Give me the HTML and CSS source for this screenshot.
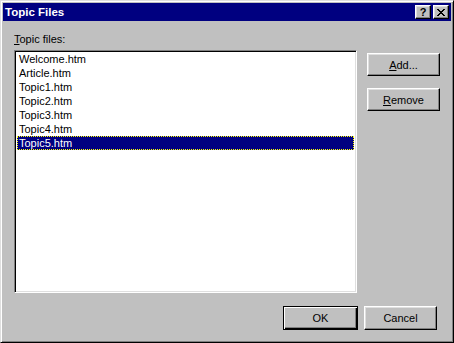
FILE: index.html
```html
<!DOCTYPE html>
<html lang="en">
<head>
    <meta charset="UTF-8">
    <title>Topic Files</title>
    <link rel="stylesheet" href="styles.css">
</head>
<body>

    <div class="topic-files-window">
        <!-- Caption -->
        <div class="topic-files-titlebar">
            <span class="topic-files-title">Topic Files</span>
            <div class="topic-files-caption-buttons">
                <button class="topic-files-caption-btn topic-files-help">?</button>
                <button class="topic-files-caption-btn topic-files-close">
                    <svg width="8" height="7" viewBox="0 0 8 7" shape-rendering="crispEdges">
                        <path d="M0 0h2v1h-2zM6 0h2v1h-2zM1 1h2v1h-2zM5 1h2v1h-2zM2 2h4v1h-4zM3 3h2v1h-2zM2 4h4v1h-4zM1 5h2v1h-2zM5 5h2v1h-2zM0 6h2v1h-2zM6 6h2v1h-2z" fill="#000"/>
                    </svg>
                </button>
            </div>
        </div>

        <div class="topic-files-body">
            <div class="topic-files-label"><u>T</u>opic files:</div>

            <div class="topic-files-main">
                <ul class="topic-files-list">
                    <li>Welcome.htm</li>
                    <li>Article.htm</li>
                    <li>Topic1.htm</li>
                    <li>Topic2.htm</li>
                    <li>Topic3.htm</li>
                    <li>Topic4.htm</li>
                    <li class="topic-files-selected">Topic5.htm</li>
                </ul>
                <div class="topic-files-side">
                    <button class="topic-files-btn"><u>A</u>dd...</button>
                    <button class="topic-files-btn"><u>R</u>emove</button>
                </div>
            </div>

            <div class="topic-files-footer">
                <button class="topic-files-btn topic-files-default">OK</button>
                <button class="topic-files-btn">Cancel</button>
            </div>
        </div>
    </div>

</body>
</html>
```

FILE: styles.css
```css
/* Page */
body {
    margin: 0;
    background-color: #c0c0c0;
    font-family: 'Liberation Sans', Arial, sans-serif;
    font-size: 11px;
    color: #000;
}

/* Window frame */
.topic-files-window {
    width: 454px;
    height: 343px;
    box-sizing: border-box;
    padding: 2px;
    background-color: #c0c0c0;
    border: 1px solid;
    border-color: #dfdfdf #000 #000 #dfdfdf;
    box-shadow: inset 1px 1px #fff, inset -1px -1px #808080;
    display: flex;
    flex-direction: column;
}

/* Title bar */
.topic-files-titlebar {
    height: 18px;
    background-color: #000080;
    display: flex;
    align-items: center;
    justify-content: space-between;
    padding: 0 2px 0 2px;
}

.topic-files-title {
    color: #fff;
    font-weight: bold;
    font-size: 11.5px;
}

.topic-files-caption-buttons {
    display: flex;
    gap: 2px;
}

.topic-files-caption-btn {
    width: 16px;
    height: 14px;
    padding: 0;
    margin: 0;
    box-sizing: border-box;
    background-color: #c0c0c0;
    border: 1px solid;
    border-color: #fff #000 #000 #fff;
    box-shadow: inset -1px -1px #808080, inset 1px 1px #dfdfdf;
    display: flex;
    align-items: center;
    justify-content: center;
    font-family: 'Liberation Sans', Arial, sans-serif;
    font-weight: bold;
    font-size: 11px;
    line-height: 10px;
    color: #000;
}

.topic-files-close svg {
    display: block;
    margin-top: 1px;
}

/* Dialog body */
.topic-files-body {
    padding: 12px 0 0 11px;
}

.topic-files-label {
    line-height: 13px;
    height: 13px;
    margin-bottom: 4px;
}

.topic-files-main {
    display: flex;
    align-items: flex-start;
}

/* List box */
.topic-files-list {
    width: 343px;
    height: 243px;
    box-sizing: border-box;
    margin: 0;
    padding: 1px 2px 0 2px;
    list-style: none;
    background-color: #fff;
    border: 1px solid;
    border-color: #808080 #fff #fff #808080;
    box-shadow: inset 1px 1px #000, inset -1px -1px #dfdfdf;
}

.topic-files-list li {
    height: 14px;
    line-height: 13px;
    padding: 1px 0 0 2px;
    box-sizing: border-box;
    white-space: nowrap;
}

.topic-files-selected {
    background-color: #000080;
    color: #fff;
    outline: 1px dotted #ffff00;
    outline-offset: -1px;
}

/* Side buttons */
.topic-files-side {
    display: flex;
    flex-direction: column;
    gap: 12px;
    margin-left: 10px;
    padding-top: 3px;
}

.topic-files-btn {
    width: 73px;
    height: 23px;
    padding: 0;
    margin: 0;
    box-sizing: border-box;
    background-color: #c0c0c0;
    border: 1px solid;
    border-color: #fff #000 #000 #fff;
    box-shadow: inset -1px -1px #808080, inset 1px 1px #dfdfdf;
    font-family: 'Liberation Sans', Arial, sans-serif;
    font-size: 11px;
    color: #000;
    line-height: 13px;
    padding-top: 1px;
}

/* Footer */
.topic-files-footer {
    display: flex;
    justify-content: flex-end;
    gap: 6px;
    margin-top: 13px;
    padding-right: 14px;
}

.topic-files-default {
    width: 75px;
    height: 24px;
    border: 1px solid #000;
    box-shadow: inset 1px 1px #fff, inset -1px -1px #000, inset -2px -2px #808080;
}

.topic-files-footer .topic-files-btn:last-child {
    height: 24px;
}
```
